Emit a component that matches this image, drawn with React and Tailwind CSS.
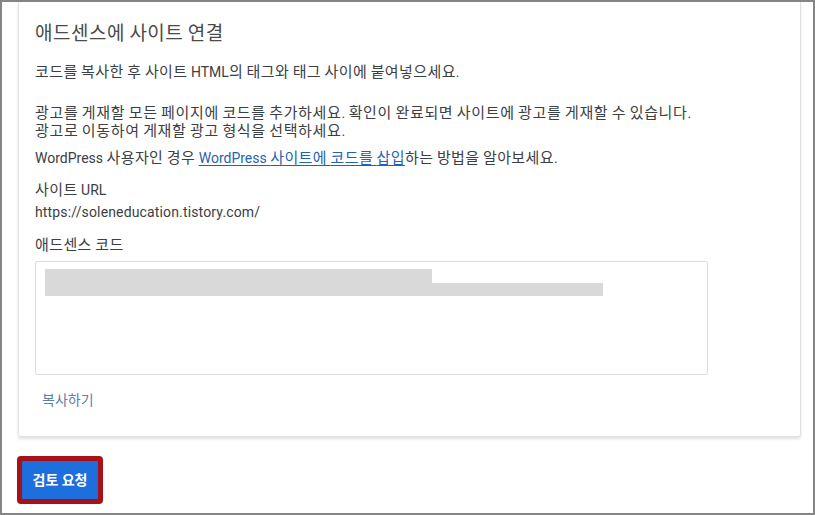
function K({ children, cls }) {
  const parts = String(children).split(/([\uAC00-\uD7A3]+)/);
  return (
    <>
      {parts.map((p, i) =>
        /[\uAC00-\uD7A3]/.test(p) ? (
          <span key={i} className={cls}>
            {p}
          </span>
        ) : (
          <span key={i}>{p}</span>
        )
      )}
    </>
  );
}

const B = "text-[15px] tracking-[0.4px]";
const B2 = "text-[15px] tracking-[0.65px]";

export default function App() {
  const font = { fontFamily: 'Roboto, "Noto Sans CJK KR", "Noto Sans", sans-serif' };
  return (
    <div className="w-[815px] h-[515px] border-2 border-[#858585] bg-white overflow-hidden" style={font}>
      <div className="ml-[16px] mr-[12px] border-x border-b border-[#e2e2e2] rounded-b-[3px] shadow-[0_2px_3px_rgba(0,0,0,0.12)] pl-[16px] pt-[20px] pb-[26px] text-[#3c4043]">
        <div className="text-[18px] leading-[24px] text-[#4a4a4a]">
          <K cls="text-[19px] tracking-[0.5px]">애드센스에 사이트 연결</K>
        </div>
        <div className="mt-[16px] text-[14px] leading-[20px]">
          <K cls={B}>코드를 복사한 후 사이트 HTML의 태그와 태그 사이에 붙여넣으세요.</K>
        </div>
        <div className="mt-[22px] text-[14px] leading-[18px]">
          <div>
            <K cls={B2}>광고를 게재할 모든 페이지에 코드를 추가하세요. 확인이 완료되면 사이트에 광고를 게재할 수 있습니다.</K>
          </div>
          <div>
            <K cls={B2}>광고로 이동하여 게재할 광고 형식을 선택하세요.</K>
          </div>
        </div>
        <div className="mt-[8px] text-[14px] leading-[20px]">
          <K cls={B}>WordPress 사용자인 경우 </K>
          <span className="text-[#1f63b4] underline underline-offset-2">
            <K cls={B}>WordPress 사이트에 코드를 삽입</K>
          </span>
          <K cls={B}>하는 방법을 알아보세요.</K>
        </div>
        <div className="mt-[12px] text-[14px] leading-[20px]">
          <K cls={B}>사이트 URL</K>
        </div>
        <div className="mt-[2px] text-[14px] leading-[20px] tracking-[0.15px]">https://soleneducation.tistory.com/</div>
        <div className="mt-[13px] text-[14px] leading-[20px]">
          <K cls={B}>애드센스 코드</K>
        </div>
        <div className="mt-[6px] w-[673px] h-[114px] border border-[#dedede] rounded-[2px] pl-[9px] pt-[7px]">
          <div className="flex">
            <div className="w-[387px] h-[27px] bg-[#d9d9d9]" />
            <div className="mt-[14px] w-[171px] h-[13px] bg-[#d9d9d9]" />
          </div>
        </div>
        <div className="mt-[15px] ml-[7px] text-[14px] leading-[20px] text-[#5d7fa8]">복사하기</div>
      </div>
      <div className="mt-[19px] ml-[15px] w-[86px] h-[48px] rounded-[4px] bg-[#a8101a] p-[5px]">
        <div className="w-full h-full bg-[#1c6fdc] rounded-[1px] flex items-center justify-center text-white font-bold text-[14px]">
          검토 요청
        </div>
      </div>
    </div>
  );
}
